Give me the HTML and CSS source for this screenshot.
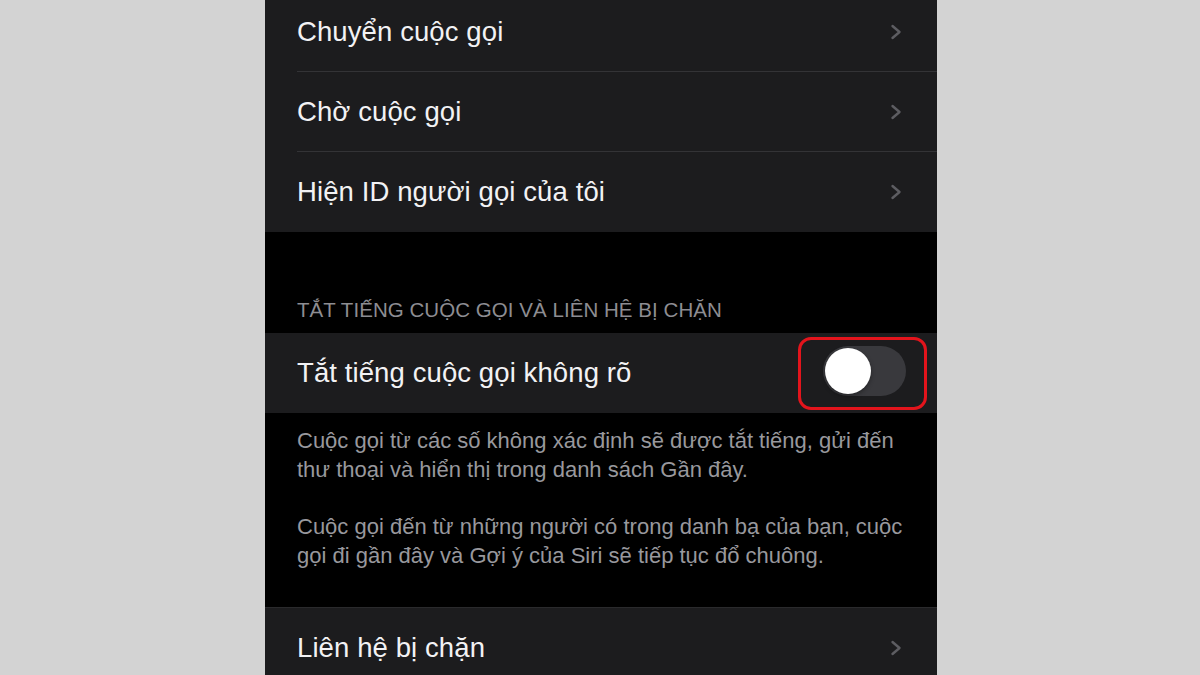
FILE: index.html
```html
<!DOCTYPE html>
<html lang="vi">
<head>
<meta charset="utf-8">
<title>Cài đặt điện thoại</title>
<link rel="stylesheet" href="styles.css">
</head>
<body>
<div class="stage">
  <div class="phone">
    <div class="group group-top">
      <div class="row sep"><span class="label">Chuyển cuộc gọi</span><svg class="chev" viewBox="0 0 12 16" width="12" height="16"><polyline points="2.5,2 9.5,8 2.5,14"/></svg></div>
      <div class="row sep"><span class="label">Chờ cuộc gọi</span><svg class="chev" viewBox="0 0 12 16" width="12" height="16"><polyline points="2.5,2 9.5,8 2.5,14"/></svg></div>
      <div class="row"><span class="label">Hiện ID người gọi của tôi</span><svg class="chev" viewBox="0 0 12 16" width="12" height="16"><polyline points="2.5,2 9.5,8 2.5,14"/></svg></div>
    </div>
    <div class="section-header">TẮT TIẾNG CUỘC GỌI VÀ LIÊN HỆ BỊ CHẶN</div>
    <div class="group">
      <div class="row row-toggle">
        <span class="label">Tắt tiếng cuộc gọi không rõ</span>
        <div class="highlight">
          <div class="switch"><span class="knob"></span></div>
        </div>
      </div>
    </div>
    <div class="footer-note">
      <p>Cuộc gọi từ các số không xác định sẽ được tắt tiếng, gửi đến<br>thư thoại và hiển thị trong danh sách Gần đây.</p>
      <p>Cuộc gọi đến từ những người có trong danh bạ của bạn, cuộc<br>gọi đi gần đây và Gợi ý của Siri sẽ tiếp tục đổ chuông.</p>
    </div>
    <div class="group group-last">
      <div class="row"><span class="label">Liên hệ bị chặn</span><svg class="chev" viewBox="0 0 12 16" width="12" height="16"><polyline points="2.5,2 9.5,8 2.5,14"/></svg></div>
    </div>
  </div>
</div>
</body>
</html>
```

FILE: styles.css
```css
html, body {
  margin: 0;
  padding: 0;
  background: #d3d3d3;
}

.stage {
  width: 1200px;
  height: 675px;
  display: flex;
  justify-content: flex-start;
  overflow: hidden;
}

.phone {
  margin-left: 265px;
  width: 672px;
  height: 675px;
  background: #000;
  overflow: hidden;
  font-family: "Liberation Sans", Arial, sans-serif;
  color: #f2f2f4;
}

.group {
  background: #1c1c1e;
}

.group-top {
  margin-top: -8px;
}

.row {
  height: 80px;
  box-sizing: border-box;
  margin-left: 32px;
  padding-right: 35px;
  display: flex;
  align-items: center;
  justify-content: space-between;
}

.row.sep {
  border-bottom: 1px solid #333336;
}

.label {
  font-size: 27.5px;
  letter-spacing: 0.1px;
}

.chev {
  display: block;
  fill: none;
  stroke: #5d5d62;
  stroke-width: 2.4;
  stroke-linecap: round;
  stroke-linejoin: round;
}

.section-header {
  padding: 66px 32px 11px;
  font-size: 20.5px;
  line-height: 24px;
  letter-spacing: 0.05px;
  color: #8d8d92;
}

.row-toggle {
  padding-right: 10px;
}

.highlight {
  border: 3px solid #e3141c;
  border-radius: 13px;
  padding: 6px 18px 11px 22px;
}

.switch {
  width: 83px;
  height: 50px;
  border-radius: 25px;
  background: #39393d;
  box-sizing: border-box;
  padding: 2px;
  display: flex;
  align-items: center;
}

.knob {
  width: 46px;
  height: 46px;
  border-radius: 50%;
  background: #ffffff;
  box-shadow: 0 2px 4px rgba(0, 0, 0, 0.35);
}

.footer-note {
  padding: 13px 32px 37px;
  font-size: 22px;
  line-height: 29px;
  color: #98989d;
}

.footer-note p {
  margin: 0;
}

.footer-note p + p {
  margin-top: 28px;
}

.group-last {
  border-top: 1px solid #2a2a2c;
}
```
